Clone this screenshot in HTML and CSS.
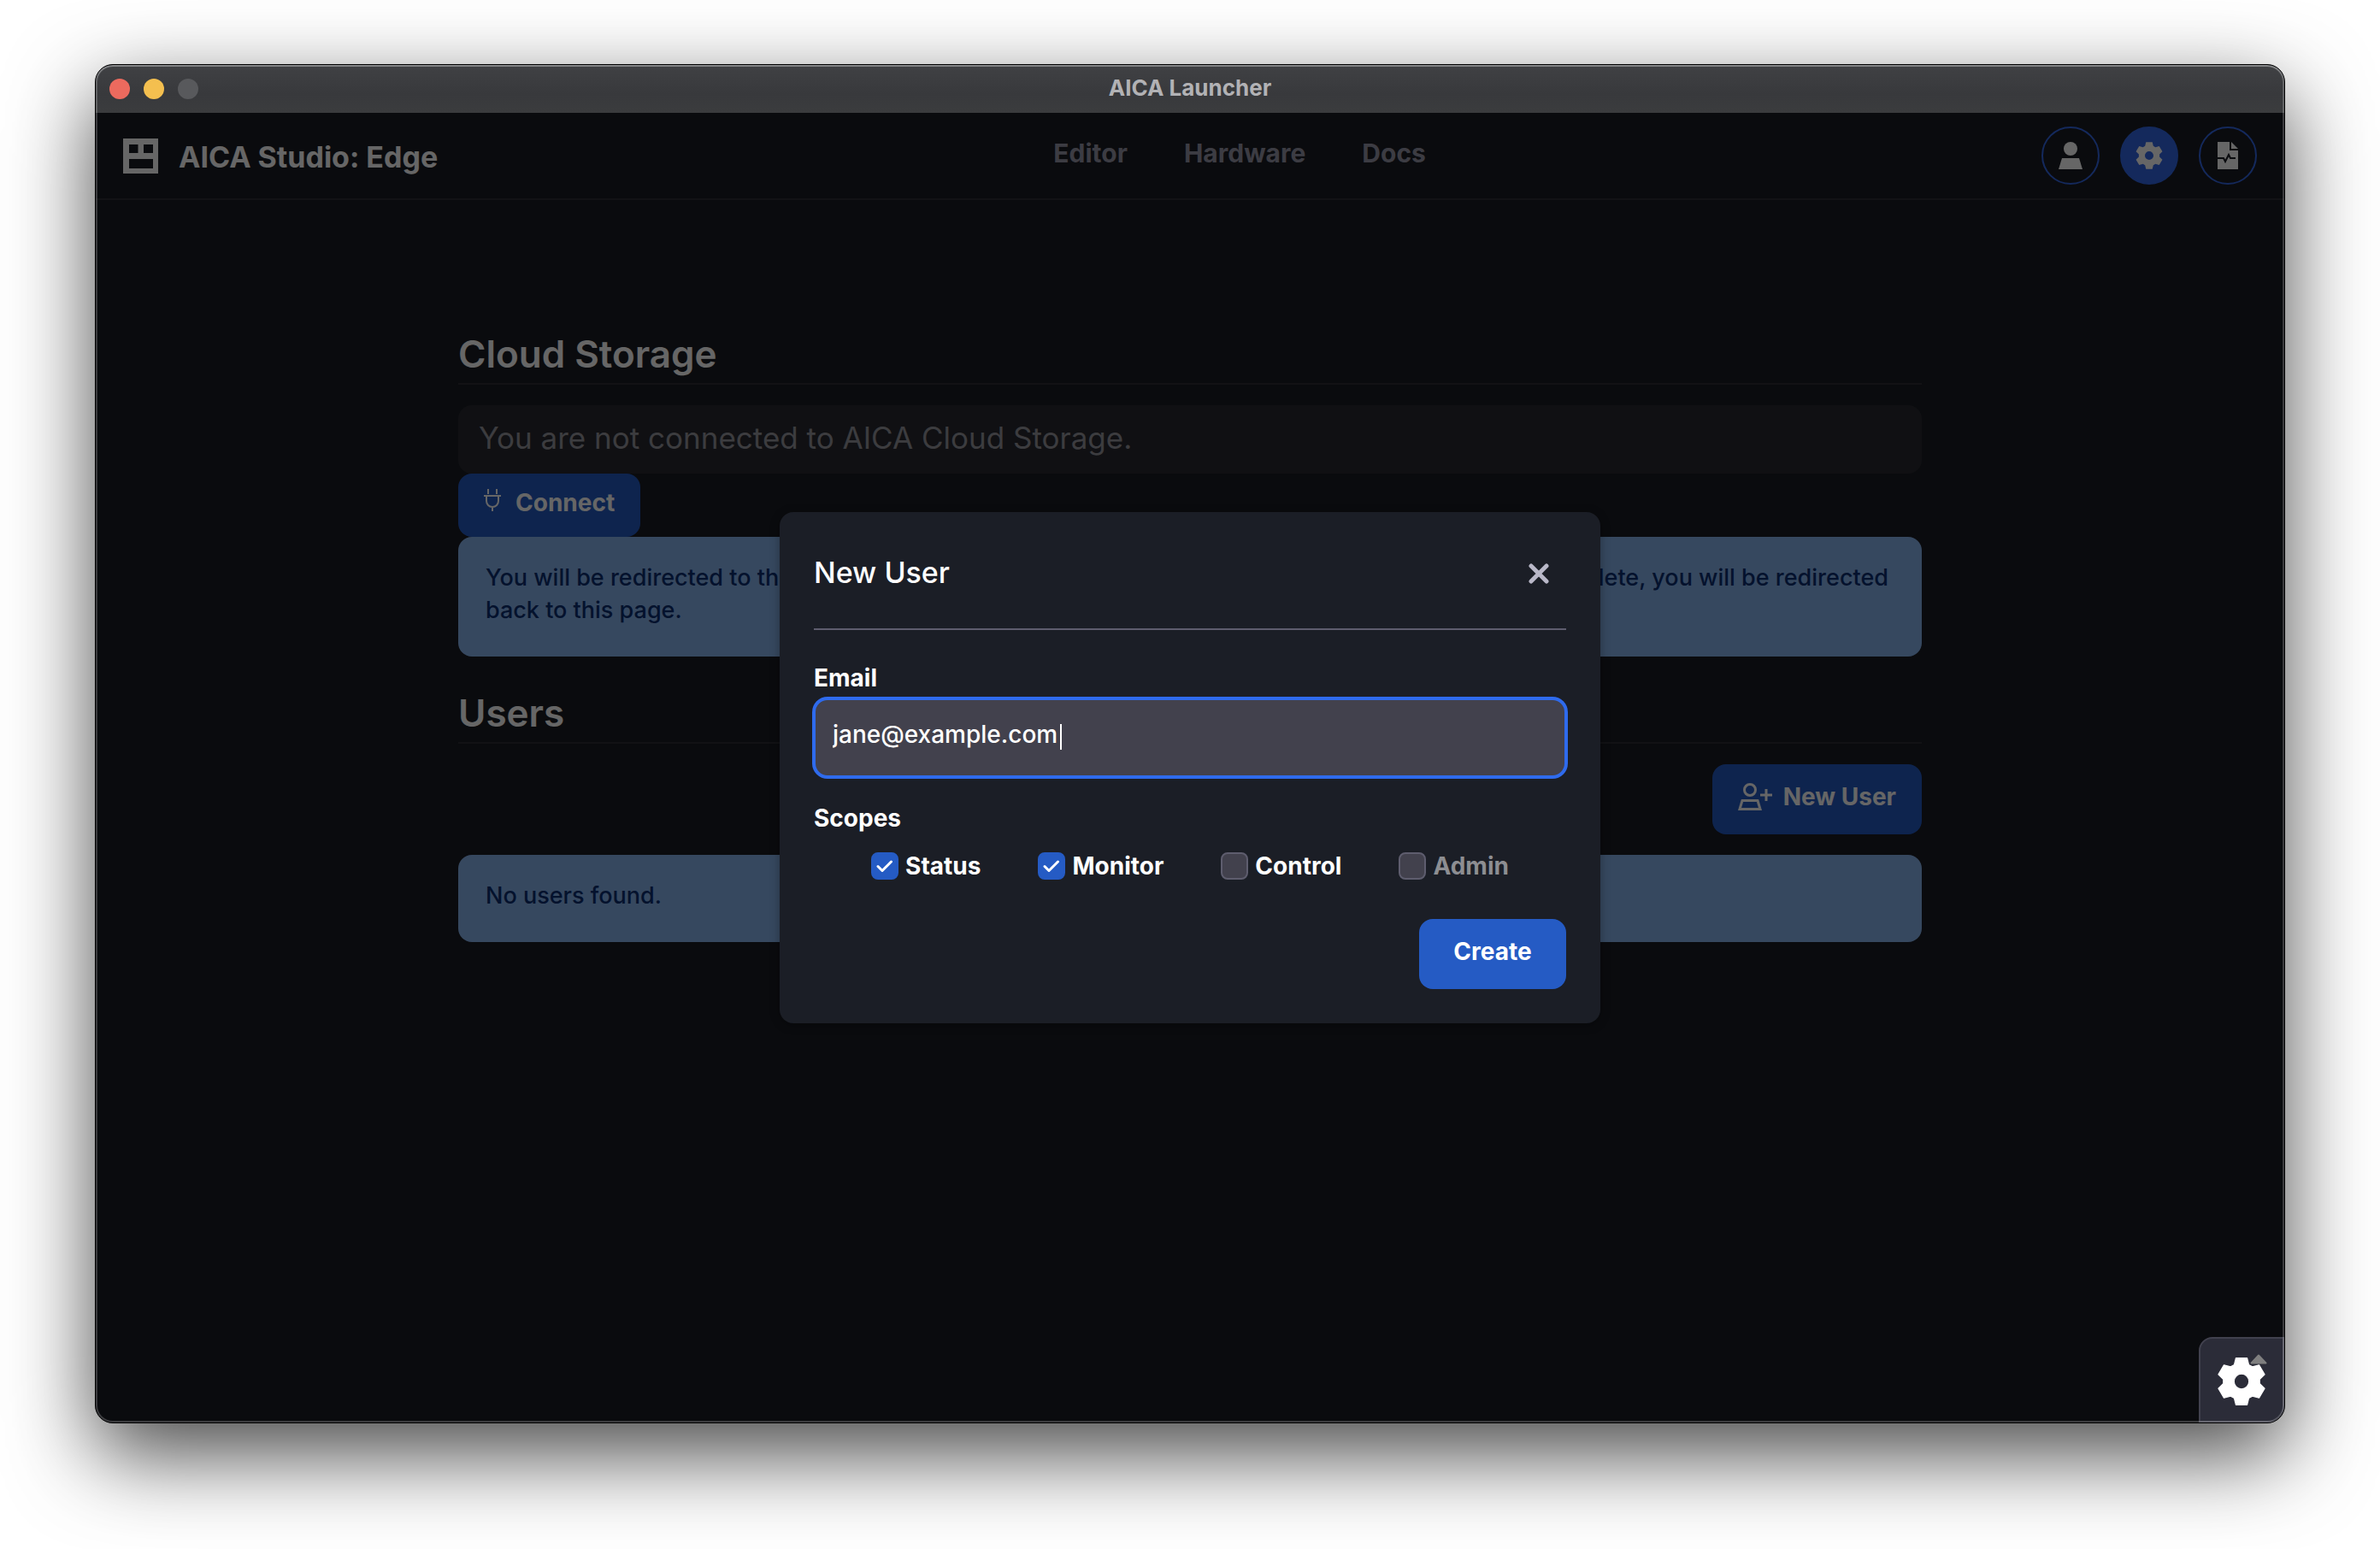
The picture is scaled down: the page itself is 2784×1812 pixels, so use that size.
FILE: index.html
```html
<!DOCTYPE html>
<html lang="en">
<head>
<meta charset="utf-8">
<meta name="viewport" content="width=device-width, initial-scale=1">
<title>AICA Launcher</title>
<link rel="stylesheet" href="styles.css">
</head>
<body>
<svg class="sprite" aria-hidden="true">
  <symbol id="gear" viewBox="-86 -86 172 172">
    <path fill-rule="evenodd" stroke-linejoin="round" d="M-26-60L-20-84H20L26-60L39-52.500L63-59L83-25L65-7.500V7.500L83 25L63 59L39 52.500L26 60L20 84H-20L-26 60L-39 52.500L-63 59L-83 25L-65 7.500V-7.500L-83-25L-63-59L-39-52.500ZM0-27A27 27 0 1 0 0 27A27 27 0 1 0 0-27Z"/>
  </symbol>
</svg>
<div class="window">
  <div class="titlebar">
    <div class="lights">
      <span class="light light-close"></span>
      <span class="light light-min"></span>
      <span class="light"></span>
    </div>
    <div class="window-title">AICA Launcher</div>
  </div>
  <div class="app">
    <header class="header">
      <div class="brand">
        <svg class="logo" viewBox="0 0 41 41" aria-hidden="true"><path fill="currentColor" fill-rule="evenodd" d="M0 0H41V41H0ZM7 7V17H17.500V7ZM24 7V17H35V7ZM7 24V35H35V24Z"/></svg>
        <span class="brand-name">AICA Studio: Edge</span>
      </div>
      <nav class="nav">
        <a href="#editor">Editor</a>
        <a href="#hardware">Hardware</a>
        <a href="#docs">Docs</a>
      </nav>
      <div class="actions">
        <button class="round" type="button" aria-label="Account">
          <svg class="icon" viewBox="0 0 32 32"><circle cx="16" cy="8" r="8"/><path d="M6 19H26L30 32H2Z"/></svg>
        </button>
        <button class="round round-active" type="button" aria-label="Settings">
          <svg class="icon"><use href="#gear"/></svg>
        </button>
        <button class="round" type="button" aria-label="Logs">
          <svg class="icon" viewBox="0 0 32 32"><path d="M4 0H18V10H28V32H4Z"/><path d="M20 0L28 8H20Z"/><path class="pulse" d="M4 19H11L13 23L17 15L19 19H25"/></svg>
        </button>
      </div>
    </header>
    <main class="main">
      <section class="section">
        <h2 class="heading">Cloud Storage</h2>
        <p class="status">You are not connected to AICA Cloud Storage.</p>
        <button class="btn btn-connect" type="button">
          <svg class="icon-plug" viewBox="0 0 24 32" aria-hidden="true"><path d="M5 0V6M15 0V6M0 8H20M3 8V14C3 18 6 21 10 21C14 21 17 18 17 14V8M10 21V26"/></svg>
          Connect
        </button>
        <p class="info">You will be redirected to the AICA login page to authenticate your account. Once the process is complete, you will be redirected back to this page.</p>
      </section>
      <section class="section">
        <h2 class="heading">Users</h2>
        <div class="toolbar">
          <button class="btn" type="button">
            <svg class="icon-add" viewBox="0 0 40 32" aria-hidden="true"><circle cx="14" cy="8" r="6.500"/><path d="M5 20.500H23L26 30.500H2Z"/><path d="M33 7V21M26 14H40"/></svg>
            New User
          </button>
        </div>
        <p class="info">No users found.</p>
      </section>
    </main>
    <div class="overlay">
      <form class="modal" role="dialog" aria-labelledby="modal-title">
        <div class="modal-head">
          <h3 class="modal-title" id="modal-title">New User</h3>
          <button class="close" type="button" aria-label="Close">
            <svg class="icon-close" viewBox="0 0 24 24"><path d="M3 3L21 21M21 3L3 21"/></svg>
          </button>
        </div>
        <label class="label" for="email">Email</label>
        <div class="field">
          <input class="input" id="email" type="text" value="jane@example.com">
          <span class="caret"></span>
        </div>
        <fieldset class="scopes">
          <legend class="label">Scopes</legend>
          <div class="checks">
            <label class="check"><input type="checkbox" checked>Status</label>
            <label class="check"><input type="checkbox" checked>Monitor</label>
            <label class="check"><input type="checkbox">Control</label>
            <label class="check check-disabled"><input type="checkbox" disabled>Admin</label>
          </div>
        </fieldset>
        <div class="modal-foot">
          <button class="btn btn-create" type="button">Create</button>
        </div>
      </form>
    </div>
    <button class="corner" type="button" aria-label="Launcher settings">
      <svg class="corner-gear"><use href="#gear"/></svg>
      <svg class="corner-caret" viewBox="0 0 20 12" aria-hidden="true"><path d="M10 1.500L18.500 10.500H1.500Z"/></svg>
    </button>
  </div>
</div>
</body>
</html>
```

FILE: styles.css
```css
* {
  box-sizing: border-box;
}

body {
  display: flex;
  min-height: 100vh;
  margin: 0;
  padding: 75px 111px 147px;
  background: #fff;
  color: #fff;
  font: 400 28px/38px Inter, "Liberation Sans", sans-serif;
}

h2, h3, p, fieldset, legend {
  margin: 0;
  padding: 0;
  border: 0;
}

button {
  padding: 0;
  border: 0;
  background: none;
  color: inherit;
  font: inherit;
}

.sprite {
  position: absolute;
  width: 0;
  height: 0;
}

/* Window frame */
.window {
  position: relative;
  display: flex;
  flex: 1;
  flex-direction: column;
  overflow: hidden;
  border: 1px solid #000;
  border-radius: 21px;
  background: #1b1d23;
  box-shadow: 0 36px 100px rgba(0, 0, 0, .72);
}

.window::after {
  content: "";
  position: absolute;
  inset: 0;
  border-radius: 20px;
  box-shadow: inset 0 2px rgba(255, 255, 255, .2), inset 0 0 0 2px rgba(255, 255, 255, .2);
  pointer-events: none;
}

.titlebar {
  display: grid;
  grid-template-columns: 1fr auto 1fr;
  align-items: center;
  height: 56px;
  padding: 0 16px;
  background: linear-gradient(#404144, #38393c 60%, #3b3c3e);
}

.lights {
  display: flex;
  gap: 16px;
}

.light {
  width: 24px;
  height: 24px;
  border-radius: 50%;
  background: #58595c;
}

.light-close {
  background: #ec6a5e;
}

.light-min {
  background: #f4bf4f;
}

.window-title {
  padding-bottom: 3px;
  color: #b2b2b5;
  font-size: 26px;
  font-weight: 700;
}

.app {
  position: relative;
  flex: 1;
}

/* Header */
.header {
  display: flex;
  align-items: center;
  justify-content: space-between;
  height: 102px;
  padding: 0 32px;
  border-bottom: 2px solid #2d2f36;
}

.brand {
  display: flex;
  align-items: center;
  gap: 24px;
}

.logo {
  width: 41px;
  height: 41px;
}

.brand-name {
  padding-top: 4px;
  font-size: 34px;
  font-weight: 700;
}

.nav {
  display: flex;
  gap: 66px;
  padding-bottom: 6px;
  font-size: 30px;
  font-weight: 700;
}

.nav a {
  color: #9696a8;
  text-decoration: none;
}

.actions {
  display: flex;
  gap: 24px;
}

.round {
  display: grid;
  place-items: center;
  width: 68px;
  height: 68px;
  border: 2px solid #3267e6;
  border-radius: 50%;
}

.round-active {
  background: #3267e6;
}

.icon {
  width: 32px;
  height: 32px;
  fill: currentColor;
}

.pulse {
  fill: none;
  stroke: #1b1d23;
  stroke-width: 2;
}

/* Page content */
.main {
  display: flex;
  flex-direction: column;
  gap: 40px;
  max-width: 1712px;
  margin: 0 auto;
  padding-top: 154px;
}

.heading {
  margin-bottom: 24px;
  padding-bottom: 8px;
  border-bottom: 2px solid #2d2f36;
  font-size: 44px;
  font-weight: 600;
  line-height: 52px;
}

.status {
  padding: 18px 24px 22px;
  border-radius: 16px;
  background: #282a31;
  color: #96969e;
  font-size: 35px;
  line-height: 40px;
}

.btn {
  display: flex;
  align-items: center;
  justify-content: center;
  gap: 13px;
  height: 82px;
  padding: 0 30px 6px;
  border-radius: 16px;
  background: #255bc4;
  font-weight: 700;
}

.btn-connect {
  height: 74px;
}

.icon-plug {
  width: 24px;
  height: 32px;
  fill: none;
  stroke: currentColor;
  stroke-width: 2;
}

.icon-add {
  width: 40px;
  height: 32px;
  fill: none;
  stroke: currentColor;
  stroke-width: 3;
}

.info {
  padding: 29px 32px 35px;
  border-radius: 16px;
  background: #87b3ee;
  color: #0a2d70;
  font-size: 27px;
  font-weight: 500;
}

.toolbar {
  display: flex;
  justify-content: flex-end;
  margin-bottom: 24px;
}

/* New user dialog */
.overlay {
  position: absolute;
  inset: 0;
  display: grid;
  place-items: center;
  background: rgba(0, 0, 0, .6);
}

.modal {
  width: 960px;
  padding: 40px;
  border-radius: 16px;
  background: #1b1e26;
  box-shadow: 0 2px 12px rgba(0, 0, 0, .3);
}

.modal-head {
  display: flex;
  align-items: center;
  justify-content: space-between;
  height: 98px;
  margin-bottom: 36px;
  padding-bottom: 32px;
  border-bottom: 2px solid #5e5d6e;
}

.modal-title {
  padding-bottom: 2px;
  font-size: 34px;
  font-weight: 500;
}

.close {
  display: grid;
  place-items: center;
  width: 64px;
  height: 64px;
  color: #b9b8c8;
}

.icon-close {
  width: 24px;
  height: 24px;
  stroke: currentColor;
  stroke-width: 5;
  stroke-linecap: round;
}

.label {
  display: block;
  font-weight: 700;
  line-height: 40px;
}

.field {
  position: relative;
  margin: 4px 0 28px;
}

.input {
  display: block;
  width: 100%;
  height: 92px;
  padding: 0 20px 8px;
  border: 2px solid #2f6bed;
  border-radius: 16px;
  outline: 0;
  background: #42414d;
  box-shadow: 0 0 0 2px #2f6bed;
  color: #fff;
  font: inherit;
  font-weight: 500;
}

.caret {
  position: absolute;
  top: 30px;
  left: 288px;
  width: 2px;
  height: 30px;
  background: #fff;
}

.checks {
  display: flex;
  justify-content: space-evenly;
  margin: 20px 0 46px;
  font-weight: 700;
  line-height: 32px;
}

.check {
  display: flex;
  gap: 8px;
}

.check input {
  width: 32px;
  height: 32px;
  margin: 0;
  appearance: none;
  border: 2px solid #5e5d6e;
  border-radius: 8px;
  background: #42414d;
}

.check input:checked {
  border-color: #255bc4;
  background: #255bc4 url("data:image/svg+xml,%3Csvg xmlns='http://www.w3.org/2000/svg' viewBox='2 2 28 28'%3E%3Cpath d='M8 16.500L13 21.500L23.500 11' fill='none' stroke='%23fff' stroke-width='3' stroke-linecap='round' stroke-linejoin='round'/%3E%3C/svg%3E") center / 28px 28px no-repeat;
}

.check-disabled {
  color: #8d8e92;
}

.modal-foot {
  display: flex;
  justify-content: flex-end;
}

.btn-create {
  min-width: 172px;
}

/* Floating settings toggle */
.corner {
  position: absolute;
  right: 0;
  bottom: 0;
  display: grid;
  place-items: center;
  width: 100px;
  height: 100px;
  padding-top: 4px;
  border: 2px solid #41414e;
  border-top-left-radius: 16px;
  background: #2b2c38;
}

.corner-gear {
  width: 56px;
  height: 56px;
  fill: #fff;
  stroke: #fff;
  stroke-width: 4;
}

.corner-caret {
  position: absolute;
  top: 18px;
  right: 18px;
  width: 20px;
  height: 12px;
  fill: #7f7f7f;
  stroke: #7f7f7f;
  stroke-width: 2;
  stroke-linejoin: round;
}
```
